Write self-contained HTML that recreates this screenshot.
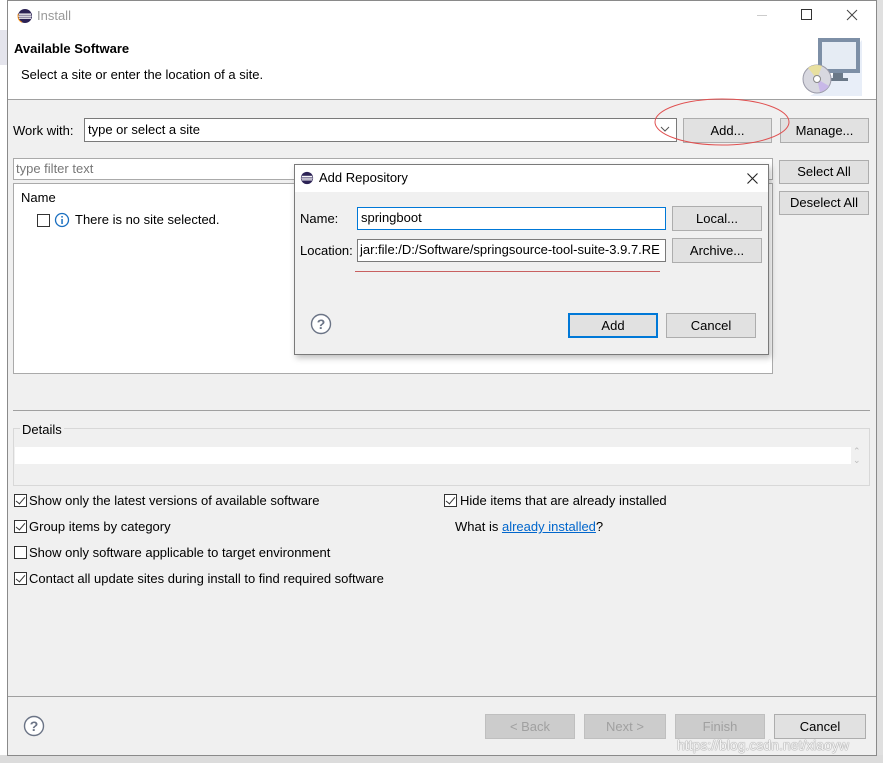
<!DOCTYPE html>
<html><head><meta charset="utf-8"><style>
*{box-sizing:border-box;margin:0;padding:0}
body{width:883px;height:763px;position:relative;background:#e8e8e8;font-family:"Liberation Sans","Noto Sans CJK SC",sans-serif;font-size:13px;color:#000;overflow:hidden}
.a{position:absolute}
.btn{position:absolute;background:#e1e1e1;border:1px solid #adadad;text-align:center;font-size:13px}
.dis{color:#a0a0a0;background:#cccccc;border-color:#bfbfbf}
.cb{position:absolute;width:13px;height:13px;border:1px solid #333;background:#fff}
.cb.c::after{content:"";position:absolute;left:3px;top:0px;width:4px;height:8px;border:solid #333;border-width:0 1.5px 1.5px 0;transform:rotate(40deg)}
.t{position:absolute;white-space:nowrap}
</style></head><body>
<div class="a" style="left:0;top:0;width:8px;height:763px;background:#fff"></div>
<div class="a" style="left:0;top:30px;width:8px;height:35px;background:#e4e4ec"></div>
<div class="a" style="left:877px;top:0;width:6px;height:763px;background:#e0e0e0"></div>
<div class="a" style="left:0;top:755px;width:883px;height:8px;background:#dcdcdc"></div>
<!-- window -->
<div class="a" style="left:7px;top:0;width:870px;height:756px;background:#f0f0f0;border:1px solid #8a8a8a"></div>
<div class="a" style="left:8px;top:1px;width:868px;height:99px;background:#fff;border-bottom:1px solid #a0a0a0"></div>
<svg class="a" style="left:17px;top:8px" width="16" height="16" viewBox="0 0 16 16"><circle cx="8" cy="8" r="7" fill="#2c2255"/><circle cx="8" cy="8" r="7" fill="none" stroke="#f7941e" stroke-width="1" stroke-dasharray="10 34" stroke-dashoffset="-14"/><rect x="2" y="5.5" width="12" height="1.3" fill="#fff"/><rect x="1.5" y="7.5" width="13" height="1.3" fill="#fff"/><rect x="2" y="9.5" width="12" height="1.3" fill="#fff"/></svg>
<div class="t" style="left:37px;top:8px;color:#999">Install</div>
<div class="a" style="left:757px;top:15px;width:10px;height:1px;background:#ccc"></div>
<div class="a" style="left:801px;top:9px;width:11px;height:11px;border:1px solid #333"></div>
<svg class="a" style="left:846px;top:9px" width="12" height="12"><path d="M1 1L11 11M11 1L1 11" stroke="#444" stroke-width="1"/></svg>
<div class="t" style="left:14px;top:41px;font-weight:bold;font-size:13px">Available Software</div>
<div class="t" style="left:21px;top:67px">Select a site or enter the location of a site.</div>
<svg class="a" style="left:800px;top:30px" width="62" height="66" viewBox="0 0 62 66"><path d="M20 60 Q45 30 62 10 V66 H10Z" fill="#e8eef8"/><rect x="18" y="8" width="42" height="35" fill="#7d8fa6"/><rect x="22" y="12" width="34" height="27" fill="#e6ecf4"/><rect x="33" y="43" width="10" height="6" fill="#6a7888"/><rect x="26" y="48" width="22" height="3" fill="#6a7888"/><circle cx="17" cy="49" r="14" fill="#d8d8e0" stroke="#9a9aa8"/><path d="M17 49 L8 38 A14 14 0 0 1 22 36Z" fill="#e8e0a0"/><path d="M17 49 L29 56 A14 14 0 0 1 20 62Z" fill="#c8b8e8"/><circle cx="17" cy="49" r="3.5" fill="#fff" stroke="#888"/></svg>
<div class="t" style="left:13px;top:123px">Work with:</div>
<div class="a" style="left:84px;top:118px;width:593px;height:24px;background:#fff;border:1px solid #7a7a7a"></div>
<div class="t" style="left:88px;top:122px">type or select a site</div>
<svg class="a" style="left:660px;top:126px" width="10" height="6"><path d="M1 1L5 5L9 1" fill="none" stroke="#555"/></svg>
<div class="btn" style="left:683px;top:118px;width:89px;height:25px;line-height:23px">Add...</div>
<div class="btn" style="left:780px;top:118px;width:89px;height:25px;line-height:23px">Manage...</div>
<svg class="a" style="left:650px;top:96px" width="145" height="54"><ellipse cx="72" cy="26" rx="67" ry="23" fill="none" stroke="#e05050" stroke-width="1"/></svg>
<div class="a" style="left:13px;top:158px;width:760px;height:22px;background:#fff;border:1px solid #aaa"></div>
<div class="t" style="left:16px;top:161px;color:#777">type filter text</div>
<div class="btn" style="left:779px;top:160px;width:90px;height:24px;line-height:22px">Select All</div>
<div class="btn" style="left:779px;top:191px;width:90px;height:24px;line-height:22px">Deselect All</div>
<div class="a" style="left:13px;top:183px;width:760px;height:191px;background:#fff;border:1px solid #aaa"></div>
<div class="t" style="left:21px;top:190px">Name</div>
<div class="cb" style="left:37px;top:214px"></div>
<svg class="a" style="left:54px;top:212px" width="16" height="16"><circle cx="8" cy="8" r="6.5" fill="#fff" stroke="#1a6fc0" stroke-width="1.3"/><rect x="7.3" y="7" width="1.5" height="5" fill="#1a6fc0"/><rect x="7.3" y="4" width="1.5" height="1.6" fill="#1a6fc0"/></svg>
<div class="t" style="left:75px;top:212px">There is no site selected.</div>
<div class="a" style="left:13px;top:410px;width:857px;height:1px;background:#a0a0a0"></div>
<div class="a" style="left:13px;top:428px;width:857px;height:58px;border:1px solid #d8d8d8"></div>
<div class="t" style="left:20px;top:422px;background:#f0f0f0;padding:0 2px">Details</div>
<div class="a" style="left:15px;top:447px;width:836px;height:17px;background:#fff"></div>
<div class="t" style="left:853px;top:447px;color:#bbb;font-size:9px;line-height:9px">⌃<br>⌄</div>
<div class="cb c" style="left:14px;top:494px"></div><div class="t" style="left:29px;top:493px">Show only the latest versions of available software</div>
<div class="cb c" style="left:14px;top:520px"></div><div class="t" style="left:29px;top:519px">Group items by category</div>
<div class="cb" style="left:14px;top:546px"></div><div class="t" style="left:29px;top:545px">Show only software applicable to target environment</div>
<div class="cb c" style="left:14px;top:572px"></div><div class="t" style="left:29px;top:571px">Contact all update sites during install to find required software</div>
<div class="cb c" style="left:444px;top:494px"></div><div class="t" style="left:460px;top:493px">Hide items that are already installed</div>
<div class="t" style="left:455px;top:519px">What is <span style="color:#0066cc;text-decoration:underline">already installed</span>?</div>
<div class="a" style="left:8px;top:696px;width:868px;height:1px;background:#a0a0a0"></div>
<svg class="a" style="left:23px;top:715px" width="22" height="22"><circle cx="11" cy="11" r="9.5" fill="#fff" stroke="#6b7486" stroke-width="1.4"/><text x="11" y="16" text-anchor="middle" font-family="Liberation Sans" font-size="14" font-weight="bold" fill="#6b7486">?</text></svg>
<div class="btn dis" style="left:485px;top:714px;width:90px;height:25px;line-height:23px">&lt; Back</div>
<div class="btn dis" style="left:584px;top:714px;width:82px;height:25px;line-height:23px">Next &gt;</div>
<div class="btn dis" style="left:675px;top:714px;width:90px;height:25px;line-height:23px">Finish</div>
<div class="btn" style="left:774px;top:714px;width:92px;height:25px;line-height:23px">Cancel</div>
<div class="t" style="left:677px;top:737px;color:#f4f4f4;font-size:14px;text-shadow:0 0 1px #888,0 0 1px #888">https://blog.csdn.net/xiaoyw</div>
<!-- dialog -->
<div class="a" style="left:294px;top:164px;width:475px;height:191px;background:#f0f0f0;border:1px solid #7a7a7a;box-shadow:2px 3px 6px rgba(0,0,0,.25)"></div>
<div class="a" style="left:295px;top:165px;width:473px;height:27px;background:#fff"></div>
<svg class="a" style="left:300px;top:171px" width="14" height="14" viewBox="0 0 16 16"><circle cx="8" cy="8" r="7" fill="#2c2255"/><rect x="2" y="5.5" width="12" height="1.3" fill="#fff"/><rect x="1.5" y="7.5" width="13" height="1.3" fill="#fff"/><rect x="2" y="9.5" width="12" height="1.3" fill="#fff"/></svg>
<div class="t" style="left:319px;top:170px">Add Repository</div>
<svg class="a" style="left:747px;top:173px" width="11" height="11"><path d="M0.5 0.5L10.5 10.5M10.5 0.5L0.5 10.5" stroke="#222" stroke-width="1.1"/></svg>
<div class="t" style="left:300px;top:211px">Name:</div>
<div class="a" style="left:357px;top:207px;width:309px;height:23px;background:#fff;border:1px solid #0078d7"></div>
<div class="t" style="left:361px;top:210px">springboot</div>
<div class="btn" style="left:672px;top:206px;width:90px;height:25px;line-height:23px">Local...</div>
<div class="t" style="left:300px;top:243px">Location:</div>
<div class="a" style="left:357px;top:239px;width:309px;height:23px;background:#fff;border:1px solid #7a7a7a;overflow:hidden"><div class="t" style="left:2px;top:2px">jar:file:/D:/Software/springsource-tool-suite-3.9.7.RE</div></div>
<div class="btn" style="left:672px;top:238px;width:90px;height:25px;line-height:23px">Archive...</div>
<div class="a" style="left:355px;top:271px;width:305px;height:1px;background:#c86060"></div>
<svg class="a" style="left:310px;top:313px" width="22" height="22"><circle cx="11" cy="11" r="9.5" fill="#fff" stroke="#6b7486" stroke-width="1.4"/><text x="11" y="16" text-anchor="middle" font-family="Liberation Sans" font-size="14" font-weight="bold" fill="#6b7486">?</text></svg>
<div class="btn" style="left:568px;top:313px;width:90px;height:25px;line-height:21px;border:2px solid #0078d7">Add</div>
<div class="btn" style="left:666px;top:313px;width:90px;height:25px;line-height:23px">Cancel</div>
</body></html>
